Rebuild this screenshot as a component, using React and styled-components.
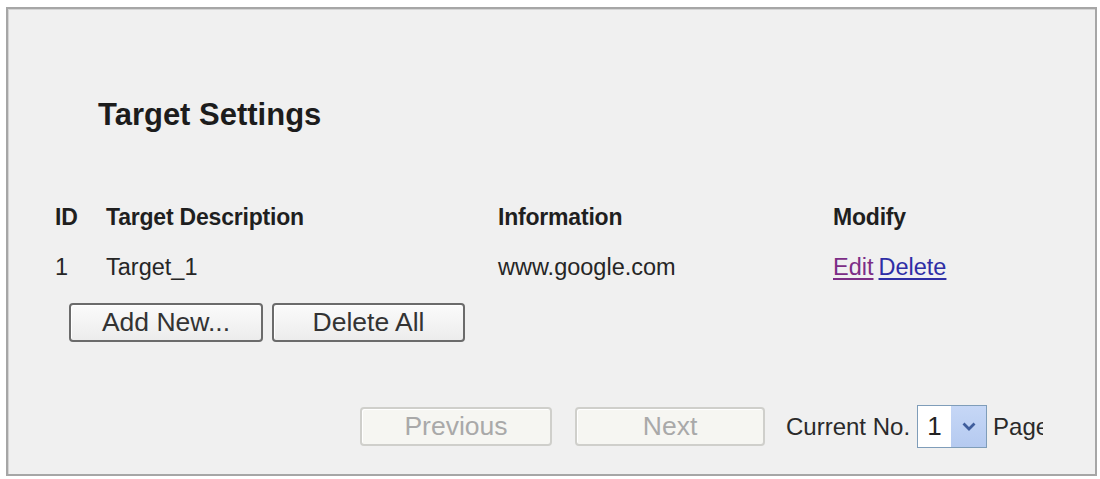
import styled, { createGlobalStyle } from "styled-components";

const GlobalStyle = createGlobalStyle`
  html, body {
    margin: 0;
    padding: 0;
    background: #ffffff;
  }
  body {
    font-family: "Liberation Sans", Arial, sans-serif;
  }
`;

const Panel = styled.div`
  margin: 7px 3px 3px 6px;
  height: 469px;
  box-sizing: border-box;
  border: 2px solid #a6a6a6;
  box-shadow: inset 1px 1px 0 #d4d4d4;
  background: #f0f0f0;
  padding: 88px 0 0 47px;
  overflow: hidden;
`;

const Title = styled.h1`
  margin: 0 0 59px 43px;
  font-size: 31px;
  line-height: 36px;
  font-weight: bold;
  color: #1c1c1c;
`;

const Table = styled.div`
  display: grid;
  grid-template-columns: 51px 392px 335px 200px;
  grid-auto-rows: 50px;
  align-items: center;
  font-size: 23.5px;
  color: #262626;
`;

const HeadCell = styled.div`
  font-weight: bold;
  font-size: 23px;
  letter-spacing: -0.2px;
  color: #1f1f1f;
`;

const Cell = styled.div``;

const Link = styled.a`
  color: ${(p) => (p.$visited ? "#7c2d86" : "#2e2ea6")};
  text-decoration: underline;
  text-underline-offset: 3px;
  margin-right: 5px;
  cursor: pointer;
`;

const ButtonRow = styled.div`
  display: flex;
  gap: 9px;
  margin: 11px 0 0 14px;
`;

const Button = styled.button`
  box-sizing: border-box;
  flex-shrink: 0;
  width: ${(p) => p.$w}px;
  height: 39px;
  padding: 0;
  border-radius: 4px;
  font-family: "Liberation Sans", Arial, sans-serif;
  font-size: 26.5px;
  border: 2px solid ${(p) => (p.disabled ? "#cfcfcb" : "#6b6b6b")};
  color: ${(p) => (p.disabled ? "#a9a9a9" : "#333333")};
  background: ${(p) =>
    p.disabled
      ? "#f6f6f2"
      : "linear-gradient(#fbfbfb, #ececec)"};
  box-shadow: inset 1px 1px 0 #ffffff;
`;

/* the page label runs past the cell edge and gets cut off */
const Pager = styled.div`
  display: flex;
  align-items: center;
  width: 683px;
  margin: 63px 0 0 305px;
  overflow: hidden;
  white-space: nowrap;
  font-size: 24px;
  color: #2a2a2a;
`;

const PagerLabel = styled.span`
  flex-shrink: 0;
  margin: ${(p) => p.$m};
`;

const Select = styled.div`
  box-sizing: border-box;
  display: flex;
  width: 70px;
  height: 43px;
  border: 1px solid #7f9db9;
  background: #ffffff;
  flex-shrink: 0;
`;

const SelectValue = styled.span`
  flex: 1;
  display: flex;
  align-items: center;
  justify-content: center;
  font-size: 26px;
  color: #222;
`;

const SelectArrow = styled.span`
  width: 35px;
  display: flex;
  align-items: center;
  justify-content: center;
  background: linear-gradient(#c6d7f6, #b5caf0);
`;

export default function App() {
  return (
    <>
      <GlobalStyle />
      <Panel>
        <Title>Target Settings</Title>
        <Table>
          <HeadCell>ID</HeadCell>
          <HeadCell>Target Description</HeadCell>
          <HeadCell>Information</HeadCell>
          <HeadCell>Modify</HeadCell>
          <Cell>1</Cell>
          <Cell>Target_1</Cell>
          <Cell>www.google.com</Cell>
          <Cell>
            <Link $visited>Edit</Link>
            <Link>Delete</Link>
          </Cell>
        </Table>
        <ButtonRow>
          <Button $w={194}>Add New...</Button>
          <Button $w={193}>Delete All</Button>
        </ButtonRow>
        <Pager>
          <Button $w={192} disabled>
            Previous
          </Button>
          <PagerLabel $m="0 0 0 23px" />
          <Button $w={190} disabled>
            Next
          </Button>
          <PagerLabel $m="0 7px 0 21px">Current No.</PagerLabel>
          <Select>
            <SelectValue>1</SelectValue>
            <SelectArrow>
              <svg width="16" height="11" viewBox="0 0 16 11">
                <path
                  d="M2.5 2.5 L8 8 L13.5 2.5"
                  fill="none"
                  stroke="#3f5d9c"
                  strokeWidth="2.8"
                />
              </svg>
            </SelectArrow>
          </Select>
          <PagerLabel $m="0 0 0 6px">Page</PagerLabel>
        </Pager>
      </Panel>
    </>
  );
}
